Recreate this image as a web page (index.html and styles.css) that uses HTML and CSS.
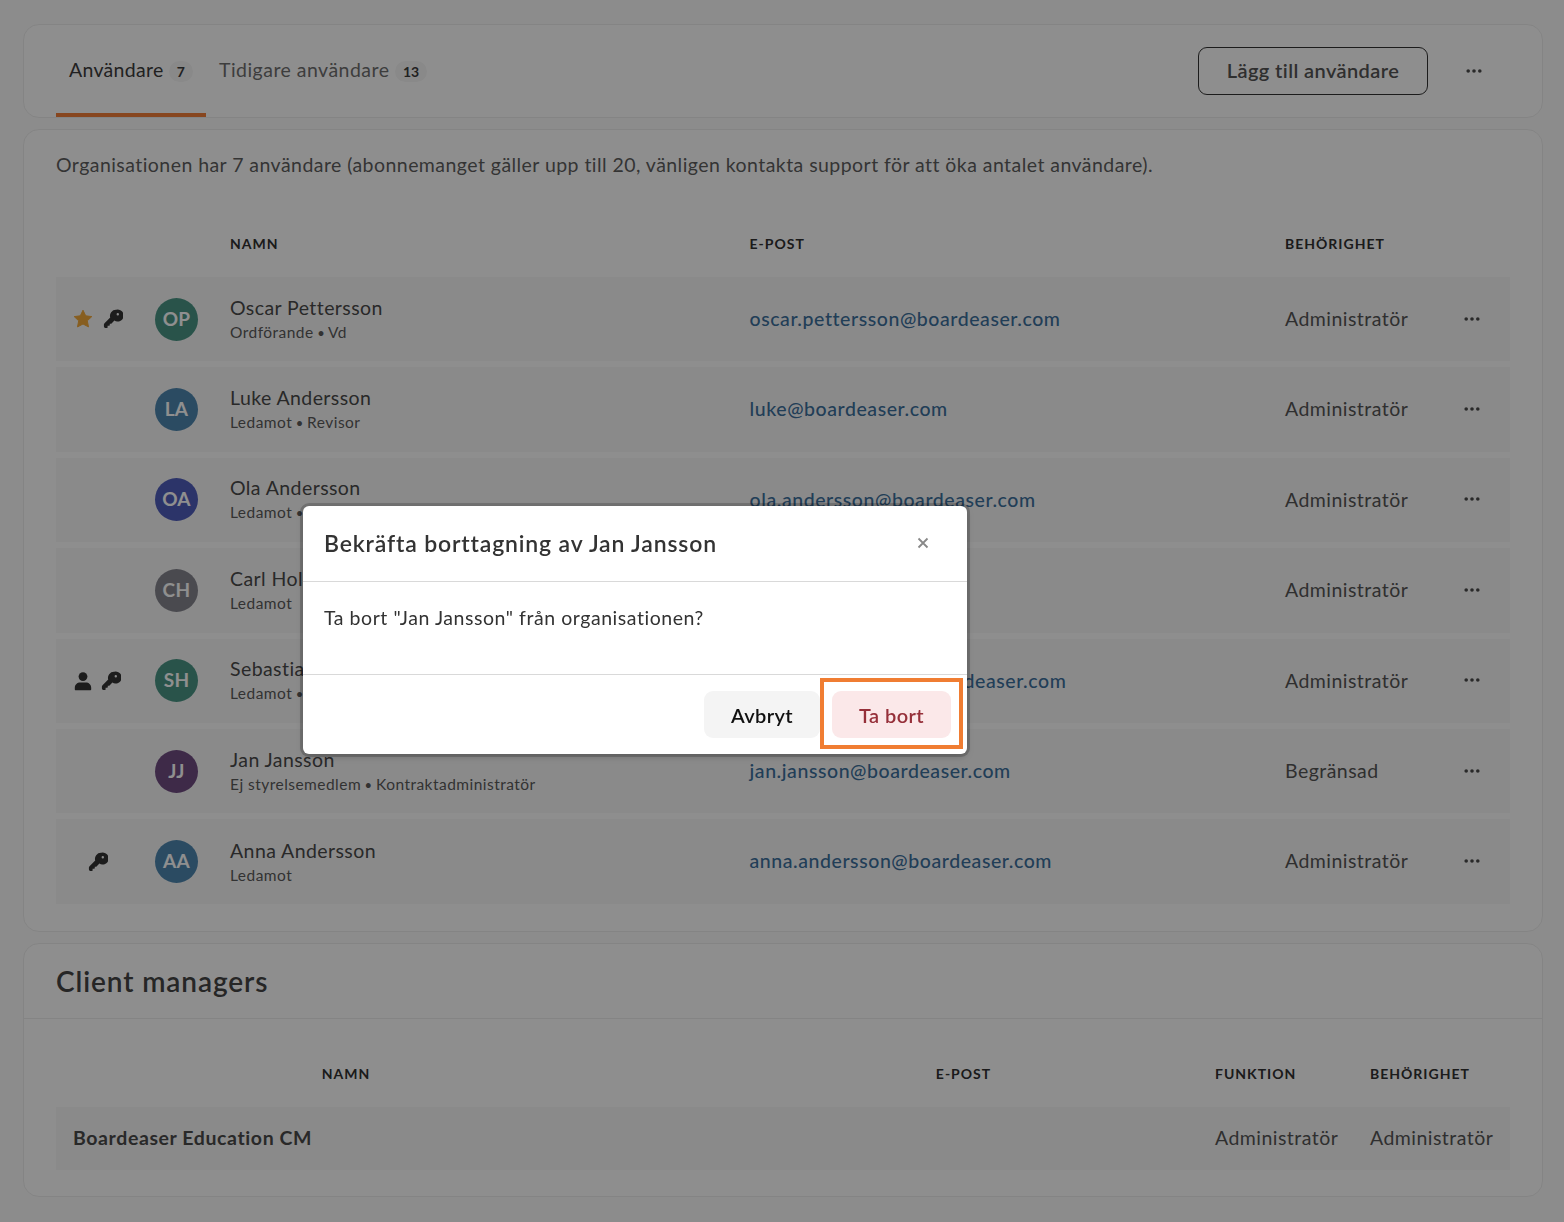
FILE: index.html
```html
<!DOCTYPE html>
<html lang="sv">
<head>
<meta charset="utf-8">
<title>Användare</title>
<link rel="stylesheet" href="styles.css">
</head>
<body>
<svg class="defs" width="0" height="0" aria-hidden="true">
  <symbol id="key" viewBox="0 0 20 20"><path d="M13 .8a6 6 0 0 0-5.800 7.700L1.500 14.200a1.900 1.900 0 0 0-.6 1.400v1.700c0 1 .8 1.800 1.800 1.800h1c.5 0 .9-.4.900-.9v-1.400h1.500c.4 0 .7-.3.7-.7v-1.400h1.500l3.100-3.100A6 6 0 1 0 13 .8Zm1.800 3.200a1.200 1.200 0 1 1 0 2.400 1.200 1.200 0 0 1 0-2.400Z" fill-rule="evenodd"/></symbol>
  <symbol id="dots" viewBox="0 0 16 4"><circle cx="2.200" cy="2" r="1.800"/><circle cx="8" cy="2" r="1.800"/><circle cx="13.800" cy="2" r="1.800"/></symbol>
</svg>
<main class="page">
  <section class="card tabs-card">
    <nav class="tabs">
      <a class="tab active">Användare <span class="pill">7</span></a>
      <a class="tab">Tidigare användare <span class="pill">13</span></a>
    </nav>
    <div class="tab-actions">
      <button class="outline-btn">Lägg till användare</button>
      <svg class="dots dots-top"><use href="#dots"/></svg>
    </div>
  </section>

  <section class="card users-card">
    <p class="intro">Organisationen har 7 användare (abonnemanget gäller upp till 20, vänligen kontakta support för att öka antalet användare).</p>
    <div class="user-grid head">
      <span></span><span></span><span class="th">NAMN</span><span class="th">E-POST</span><span class="th">BEHÖRIGHET</span><span></span>
    </div>
    <div class="rows">
      <div class="user-grid row">
        <div class="marks">
          <svg class="star" viewBox="0 0 20 20"><path d="M10 1.200l2.700 5.600 6.100.8-4.500 4.200 1.200 6.100L10 15l-5.500 2.900 1.200-6.100L1.200 7.600l6.100-.8z" stroke-width="1" stroke-linejoin="round"/></svg>
          <svg class="key"><use href="#key"/></svg>
        </div>
        <div class="avatar green">OP</div>
        <div class="who"><div class="name">Oscar Pettersson</div><div class="sub">Ordförande <span class="sep">•</span> Vd</div></div>
        <a class="mail">oscar.pettersson@boardeaser.com</a>
        <div class="role">Administratör</div>
        <svg class="dots"><use href="#dots"/></svg>
      </div>
      <div class="user-grid row">
        <div class="marks"></div>
        <div class="avatar blue">LA</div>
        <div class="who"><div class="name">Luke Andersson</div><div class="sub">Ledamot <span class="sep">•</span> Revisor</div></div>
        <a class="mail">luke@boardeaser.com</a>
        <div class="role">Administratör</div>
        <svg class="dots"><use href="#dots"/></svg>
      </div>
      <div class="user-grid row">
        <div class="marks"></div>
        <div class="avatar indigo">OA</div>
        <div class="who"><div class="name">Ola Andersson</div><div class="sub">Ledamot <span class="sep">•</span> Revisor</div></div>
        <a class="mail">ola.andersson@boardeaser.com</a>
        <div class="role">Administratör</div>
        <svg class="dots"><use href="#dots"/></svg>
      </div>
      <div class="user-grid row">
        <div class="marks"></div>
        <div class="avatar grey">CH</div>
        <div class="who"><div class="name">Carl Holm</div><div class="sub">Ledamot</div></div>
        <a class="mail">carl@boardeaser.com</a>
        <div class="role">Administratör</div>
        <svg class="dots"><use href="#dots"/></svg>
      </div>
      <div class="user-grid row">
        <div class="marks tight">
          <svg class="person" viewBox="0 0 20 20"><circle cx="10" cy="5.600" r="4.400"/><path d="M1.800 18.600v-1.800c0-3.400 2.600-5.400 5.200-5.400h6c2.600 0 5.200 2 5.200 5.400v1.800c0 .4-.3.6-.6.6H2.400c-.3 0-.6-.2-.6-.6Z"/></svg>
          <svg class="key"><use href="#key"/></svg>
        </div>
        <div class="avatar green">SH</div>
        <div class="who"><div class="name">Sebastian Holm</div><div class="sub">Ledamot <span class="sep">•</span> Revisor</div></div>
        <a class="mail">sebastian.hanson@boardeaser.com</a>
        <div class="role">Administratör</div>
        <svg class="dots"><use href="#dots"/></svg>
      </div>
      <div class="user-grid row">
        <div class="marks"></div>
        <div class="avatar purple">JJ</div>
        <div class="who"><div class="name">Jan Jansson</div><div class="sub">Ej styrelsemedlem <span class="sep">•</span> Kontraktadministratör</div></div>
        <a class="mail">jan.jansson@boardeaser.com</a>
        <div class="role">Begränsad</div>
        <svg class="dots"><use href="#dots"/></svg>
      </div>
      <div class="user-grid row">
        <div class="marks single"><svg class="key"><use href="#key"/></svg></div>
        <div class="avatar blue">AA</div>
        <div class="who"><div class="name">Anna Andersson</div><div class="sub">Ledamot</div></div>
        <a class="mail">anna.andersson@boardeaser.com</a>
        <div class="role">Administratör</div>
        <svg class="dots"><use href="#dots"/></svg>
      </div>
    </div>
  </section>

  <section class="card cm-card">
    <h2 class="cm-title">Client managers</h2>
    <div class="cm-body">
      <div class="cm-grid cm-head">
        <span class="th center">NAMN</span><span class="th center cm-mail">E-POST</span><span class="th">FUNKTION</span><span class="th">BEHÖRIGHET</span>
      </div>
      <div class="cm-grid cm-row">
        <strong class="cm-name">Boardeaser Education CM</strong><span></span>
        <span class="role">Administratör</span><span class="role">Administratör</span>
      </div>
    </div>
  </section>
</main>

<div class="overlay"></div>
<div class="modal" role="dialog">
  <header class="modal-head">
    <h3 class="modal-title">Bekräfta borttagning av Jan Jansson</h3>
    <svg class="close" viewBox="0 0 12 12"><path d="M1.500 1.500l9 9M10.500 1.500l-9 9"/></svg>
  </header>
  <div class="modal-body">Ta bort "Jan Jansson" från organisationen?</div>
  <footer class="modal-foot">
    <button class="btn cancel">Avbryt</button>
    <button class="btn danger">Ta bort</button>
  </footer>
  <div class="highlight"></div>
</div>
</body>
</html>
```
FILE: styles.css
```css
* { box-sizing: border-box; }
html, body { margin: 0; }
body {
  background: #fafafa;
  color: #444;
  font-family: Lato, "Noto Sans", sans-serif;
  height: 1222px;
  overflow: hidden;
}
.defs { position: absolute; }
.page {
  padding: 24px 21px 0 23px;
  display: flex;
  flex-direction: column;
  gap: 11px;
}
.card {
  background: #fefefe;
  border: 1px solid #ececec;
  border-radius: 16px;
}
.tabs-card {
  height: 94px;
  padding: 0 32px;
  display: flex;
  justify-content: space-between;
}
.tabs { display: flex; }
.tab {
  width: 150px;
  padding: 33px 0 0 13px;
  font-size: 19.500px;
  color: #6e6e6e;
  white-space: nowrap;
  letter-spacing: .3px;
}
.tab.active {
  color: #3c3c3c;
  border-bottom: 4px solid #f07d38;
}
.tab + .tab { width: auto; letter-spacing: .47px; }
.pill {
  display: inline-block;
  margin-left: 0;
  padding: 0 8px;
  height: 21px;
  line-height: 22px;
  border-radius: 11px;
  background: #f4f4f4;
  color: #3c3c3c;
  font-size: 14px;
  font-weight: 700;
  letter-spacing: 0;
  vertical-align: 0;
}
.tab-actions {
  display: flex;
  align-items: flex-start;
  padding-top: 22px;
  padding-right: 28px;
  gap: 38px;
}
.outline-btn {
  width: 230px;
  height: 48px;
  padding: 0 0 2px;
  background: none;
  border: 1px solid #333;
  border-radius: 9px;
  color: #555;
  font: 600 20px Lato, sans-serif;
  letter-spacing: .4px;
}
.dots { width: 16px; height: 4px; fill: #4a4a4a; display: block; margin-bottom: 1px; }
.dots-top { margin-top: 22px; }

.users-card { height: 803px; padding: 0 32px; }
.intro {
  margin: 0;
  padding-top: 23px;
  height: 95px;
  font-size: 19.500px;
  color: #5e5e5e;
  letter-spacing: .445px;
  white-space: nowrap;
}
.user-grid {
  display: grid;
  grid-template-columns: 99px 75px 519.500px 535.500px 179px 1fr;
  align-items: center;
}
.head { height: 52px; padding-bottom: 16px; }
.th {
  font-size: 14px;
  font-weight: 700;
  letter-spacing: 1px;
  color: #303030;
}
.rows { display: flex; flex-direction: column; gap: 6px; }
.row { height: 84.400px; background: #f7f7f7; }
.marks {
  display: flex;
  align-items: center;
  padding-left: 17px;
  gap: 10px;
}
.marks.tight { gap: 8px; }
.marks.single { padding-left: 32px; }
.star { width: 20px; height: 20px; fill: #f0a83a; stroke: #f0a83a; }
.key { width: 20px; height: 20px; fill: #333; }
.person { width: 20px; height: 20px; fill: #333; }
.avatar {
  width: 43px;
  height: 43px;
  border-radius: 50%;
  color: #fff;
  font-size: 19px;
  font-weight: 700;
  display: flex;
  align-items: center;
  justify-content: center;
  letter-spacing: .3px;
  padding-bottom: 2px;
}
.avatar.green { background: #4a9585; }
.avatar.blue { background: #4d86af; }
.avatar.indigo { background: #4f5dbb; }
.avatar.grey { background: #85858e; }
.avatar.purple { background: #6f4b81; }
.who { padding-top: 3px; }
.name { font-size: 19.500px; color: #4a4a4a; letter-spacing: .42px; line-height: 24px; }
.sub { font-size: 15.500px; color: #5a5a5a; letter-spacing: .47px; line-height: 25px; }
.sep { font-size: 13px; margin: 0 -1px; }
.mail { font-size: 19.500px; font-weight: 500; color: #3c6f9c; letter-spacing: .57px; white-space: nowrap; padding-bottom: 1.500px; }
.role { font-size: 19.500px; color: #555; letter-spacing: .46px; white-space: nowrap; padding-bottom: 1.500px; }

.cm-card { height: 254px; }
.cm-title {
  margin: 0;
  height: 75px;
  padding: 20px 32px 0;
  font-size: 28px;
  font-weight: 600;
  letter-spacing: .9px;
  color: #444;
  border-bottom: 1px solid #ececec;
}
.cm-body { padding: 0 32px; }
.cm-grid {
  display: grid;
  grid-template-columns: 580px 579px 155px 1fr;
  align-items: center;
}
.cm-head { height: 88px; padding-top: 20px; }
.center { text-align: center; }
.cm-mail { padding-left: 76px; }
.cm-row { height: 63px; background: #f7f7f7; }
.cm-name { padding-left: 17px; font-size: 19.500px; font-weight: 700; color: #4a4a4a; letter-spacing: .6px; white-space: nowrap; padding-bottom: 2px; }

.overlay {
  position: fixed;
  inset: 0;
  background: rgba(0, 0, 0, .44);
}
.modal {
  position: fixed;
  left: 303px;
  top: 506px;
  width: 664px;
  height: 248px;
  background: #fff;
  border-radius: 6px;
  box-shadow: 0 0 0 3px rgba(0, 0, 0, .18), 0 3px 8px rgba(0, 0, 0, .2);
  display: flex;
  flex-direction: column;
}
.modal-head {
  height: 76px;
  padding: 0 38px 2px 21px;
  border-bottom: 1px solid #d9d9d9;
  display: flex;
  align-items: center;
  justify-content: space-between;
}
.modal-title {
  margin: 0;
  font-size: 23px;
  font-weight: 600;
  color: #333;
  letter-spacing: .84px;
}
.close { width: 12px; height: 12px; stroke: #888; stroke-width: 1.800; fill: none; }
.modal-body {
  height: 93px;
  padding: 24px 21px 0;
  font-size: 19.500px;
  color: #333;
  letter-spacing: .55px;
  border-bottom: 1px solid #d9d9d9;
}
.modal-foot {
  flex: 1;
  padding: 16px 16px 0 0;
  display: flex;
  justify-content: flex-end;
  gap: 12px;
}
.btn {
  height: 47px;
  border: 0;
  border-radius: 9px;
  font: 600 20px Lato, sans-serif;
  letter-spacing: .4px;
}
.cancel { width: 116px; background: #f4f4f4; color: #111; }
.danger { width: 119px; background: #fbe8e9; color: #96303a; }
.highlight {
  position: absolute;
  left: 517px;
  top: 172px;
  width: 143px;
  height: 71px;
  border: 4px solid #f07d32;
  pointer-events: none;
}
```
